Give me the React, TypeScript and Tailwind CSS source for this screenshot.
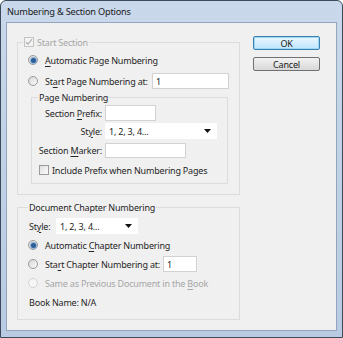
import React from "react";

const font = { fontFamily: '"Noto Sans", "Open Sans", sans-serif' };

function U({ children }: { children: React.ReactNode }) {
  return <span className="underline underline-offset-[2px]">{children}</span>;
}

function Radio({ checked = false, disabled = false }: { checked?: boolean; disabled?: boolean }) {
  return (
    <span
      className={
        "flex h-[10px] w-[10px] shrink-0 items-center justify-center rounded-full border " +
        (disabled
          ? "border-[#d4d4d4] bg-[#f6f6f6]"
          : "border-[#9a9a9a] bg-gradient-to-br from-[#d6d6d6] to-[#fbfbfb]")
      }
    >
      {checked && <span className="h-[5px] w-[5px] rounded-full bg-[#2b5f96] ring-1 ring-[#8fb3d8]" />}
    </span>
  );
}

function Check({ checked = false, disabled = false }: { checked?: boolean; disabled?: boolean }) {
  return (
    <span
      className={
        "flex h-[10px] w-[10px] shrink-0 items-center justify-center border " +
        (disabled ? "border-[#c4c4c4] bg-[#f4f4f4]" : "border-[#9a9a9a] bg-gradient-to-br from-[#e0e0e0] to-[#fbfbfb]")
      }
    >
      {checked && (
        <svg width="8" height="8" viewBox="0 0 8 8">
          <path d="M1 4 L3 6.2 L7 1.2" fill="none" stroke="#b4b4b4" strokeWidth="1.3" />
        </svg>
      )}
    </span>
  );
}

function Input({ w, value = "" }: { w: string; value?: string }) {
  return (
    <div className={"flex h-full shrink-0 items-center border border-[#d2d2d2] bg-white pl-[3px] text-[#222] " + w}>
      {value}
    </div>
  );
}

function Select({ w }: { w: string }) {
  return (
    <div className={"flex h-full shrink-0 items-center justify-between bg-white pl-[4px] pr-[6px] text-[#222] " + w}>
      <span>1, 2, 3, 4...</span>
      <svg width="7" height="4" viewBox="0 0 7 4">
        <path d="M0 0 H7 L3.5 4 Z" fill="#111" />
      </svg>
    </div>
  );
}

function Title({ children, ml }: { children: React.ReactNode; ml: string }) {
  return (
    <div className={"-mt-[8px] flex h-[14px] w-fit items-center gap-[3px] bg-[#f0f0f0] px-[1px] " + ml}>
      {children}
    </div>
  );
}

export default function App() {
  return (
    <div
      style={font}
      className="flex h-[338px] w-[343px] flex-col overflow-hidden whitespace-nowrap rounded-t-[6px] border border-[#3d4a5c] bg-gradient-to-b from-[#c9d8ea] to-[#b8cbe2] text-[9px] leading-none tracking-[-0.2px] text-[#262626]"
    >
      {/* title bar */}
      <div className="flex h-[21px] shrink-0 items-center pl-[6px] text-[9.2px] text-[#1a1a1a]">
        Numbering &amp; Section Options
      </div>

      {/* client area */}
      <div className="mx-[5px] flex h-[309px] shrink-0 border border-[#93a6bd] bg-[#f0f0f0]">
        {/* left column */}
        <div className="ml-[10px] mt-[19px] flex w-[223px] flex-col">
          {/* Start Section */}
          <div className="flex flex-col border border-[#dcdcdc] pb-[10px]">
            <Title ml="ml-[5px]">
              <Check checked disabled />
              <span className="text-[#a6a6a6]">Start Section</span>
            </Title>

            <div className="ml-[10px] mt-[4px] flex h-[14px] items-center gap-[7px]">
              <Radio checked />
              <span>
                <U>A</U>utomatic Page Numbering
              </span>
            </div>

            <div className="ml-[10px] mt-[6px] flex h-[16px] items-center gap-[7px]">
              <Radio />
              <span className="w-[100px]">
                St<U>a</U>rt Page Numbering at:
              </span>
              <div className="h-[16px]">
                <Input w="w-[77px]" value="1" />
              </div>
            </div>

            {/* Page Numbering */}
            <div className="ml-[13px] mt-[8px] flex w-[197px] flex-col border border-[#dcdcdc] pb-[7px]">
              <Title ml="ml-[6px]">Page Numbering</Title>

              <div className="mt-[1px] flex h-[16px] items-center">
                <span className="w-[73px] pr-[3px] text-right">
                  Section <U>P</U>refix:
                </span>
                <Input w="w-[51px]" />
              </div>

              <div className="mt-[2px] flex h-[16px] items-center">
                <span className="w-[73px] pr-[3px] text-right">
                  St<U>y</U>le:
                </span>
                <Select w="w-[112px]" />
              </div>

              <div className="mt-[4px] flex h-[15px] items-center">
                <span className="w-[73px] pr-[3px] text-right">
                  Section <U>M</U>arker:
                </span>
                <Input w="w-[81px]" />
              </div>

              <div className="ml-[7px] mt-[6px] flex h-[12px] items-center gap-[3px]">
                <Check />
                <span>Include Prefix when Numbering Pages</span>
              </div>
            </div>
          </div>

          {/* Document Chapter Numbering */}
          <div className="mt-[12px] flex flex-col border border-[#dcdcdc] pb-[10px]">
            <Title ml="ml-[10px]">Document Chapter Numbering</Title>

            <div className="ml-[11px] mt-[4px] flex h-[16px] items-center">
              <span className="w-[27px]">
                St<U>y</U>le:
              </span>
              <Select w="w-[82px]" />
            </div>

            <div className="ml-[10px] mt-[4px] flex h-[14px] items-center gap-[7px]">
              <Radio checked />
              <span>
                Automatic <U>C</U>hapter Numbering
              </span>
            </div>

            <div className="ml-[10px] mt-[4px] flex h-[16px] items-center gap-[7px]">
              <Radio />
              <span className="w-[111px]">
                Sta<U>r</U>t Chapter Numbering at:
              </span>
              <div className="h-[16px]">
                <Input w="w-[34px]" value="1" />
              </div>
            </div>

            <div className="ml-[10px] mt-[4px] flex h-[14px] items-center gap-[7px] text-[#a6a6a6]">
              <Radio disabled />
              <span>
                Same as Previous Document in the <U>B</U>ook
              </span>
            </div>

            <div className="ml-[11px] mt-[5px] flex h-[14px] items-center">Book Name: N/A</div>
          </div>
        </div>

        {/* buttons */}
        <div className="ml-[13px] mt-[13px] flex w-[67px] flex-col">
          <div className="flex h-[14px] items-center justify-center rounded-[2px] border border-[#3c7fb1] bg-gradient-to-b from-[#eaf6fd] to-[#bee6fd] text-[#1a1a1a] shadow-[inset_0_0_0_1px_#9fd8f5]">
            OK
          </div>
          <div className="mt-[7px] flex h-[14px] items-center justify-center rounded-[2px] border border-[#707070] bg-gradient-to-b from-[#f2f2f2] to-[#d8d8d8] text-[#1a1a1a]">
            Cancel
          </div>
        </div>
      </div>
    </div>
  );
}
